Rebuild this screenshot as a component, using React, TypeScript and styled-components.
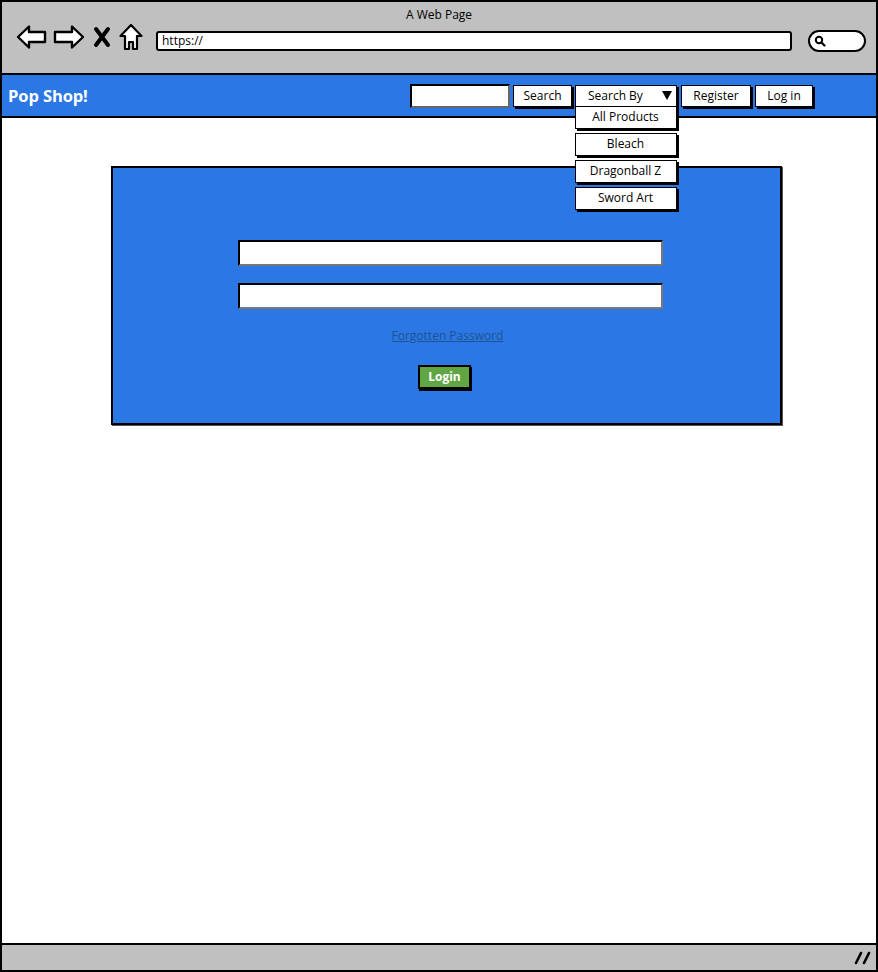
import React from "react";
import styled, { createGlobalStyle } from "styled-components";

const Global = createGlobalStyle`
  html, body { margin: 0; padding: 0; background: #fff; }
  body { font-family: "Open Sans", "Liberation Sans", sans-serif; }
  * { box-sizing: border-box; }
`;

const BLUE = "#2b78e4";
const GRAY = "#c0c0c0";

const Window = styled.div`
  width: 878px;
  height: 972px;
  border: 2px solid #000;
  display: flex;
  flex-direction: column;
  background: #fff;
`;

const TitleBar = styled.div`
  height: 73px;
  background: ${GRAY};
  border-bottom: 2px solid #000;
  display: flex;
  flex-direction: column;
`;

const Title = styled.div`
  height: 22px;
  padding-top: 4px;
  text-align: center;
  font-size: 12px;
  color: #000;
`;

const Toolbar = styled.div`
  display: flex;
  align-items: center;
  padding-left: 14px;
  height: 26px;
`;

const NavIcon = styled.svg<{ $gap: number }>`
  display: block;
  margin-right: ${(p) => p.$gap}px;
`;

const UrlBar = styled.div`
  width: 636px;
  height: 20px;
  border: 2px solid #000;
  border-radius: 3px;
  background: #fff;
  font-size: 12px;
  line-height: 16px;
  padding-left: 4px;
  margin-left: 13px;
  margin-top: 8px;
`;

const SearchPill = styled.div`
  width: 58px;
  height: 22px;
  border: 2px solid #000;
  border-radius: 11px;
  background: #fff;
  margin-left: 16px;
  margin-top: 8px;
  display: flex;
  align-items: center;
  padding-left: 4px;
`;

const Header = styled.div`
  height: 43px;
  background: ${BLUE};
  border-bottom: 2px solid #000;
  display: flex;
  align-items: center;
  padding: 0 63px 0 6px;
`;

const Brand = styled.div`
  color: #fff;
  font-weight: 700;
  font-size: 16.5px;
  letter-spacing: -0.1px;
`;

const Nav = styled.div`
  margin-left: auto;
  display: flex;
  align-items: center;
`;

const TextBox = styled.div`
  width: 100px;
  height: 24px;
  background: #fff;
  border: 2px solid #000;
  border-right-color: #666;
  border-bottom-color: #666;
  margin-right: 3px;
`;

const Button = styled.div<{ $w: number; $gap?: number }>`
  width: ${(p) => p.$w}px;
  height: 22px;
  background: #fff;
  border: 1.5px solid #000;
  box-shadow: 2px 2px 0 #000;
  font-size: 12px;
  line-height: 19px;
  text-align: center;
  color: #000;
  margin-right: ${(p) => p.$gap ?? 0}px;
  position: relative;
`;

const SelectButton = styled(Button)`
  display: flex;
  align-items: center;
  justify-content: space-between;
  padding: 0 4px 0 12px;
`;

const Menu = styled.div`
  position: absolute;
  left: -1.5px;
  top: 20px;
  display: flex;
  flex-direction: column;
  gap: 4px;
  z-index: 5;
`;

const MenuItem = styled.div`
  width: 102px;
  height: 23px;
  background: #fff;
  border: 1.5px solid #000;
  box-shadow: 2px 2px 0 #000;
  font-size: 12px;
  line-height: 20px;
  text-align: center;
  color: #000;
`;

const Content = styled.div`
  flex: 1;
  padding: 48px 0 0 109px;
`;

const Panel = styled.div`
  width: 671px;
  height: 259px;
  background: ${BLUE};
  border: 2px solid #000;
  box-shadow: 1px 1px 0 #555;
  display: flex;
  flex-direction: column;
  align-items: center;
  padding: 72px 0 0 8px;
`;

const Field = styled.div<{ $mb: number }>`
  width: 425px;
  height: 26px;
  background: #fff;
  border: 2px solid #000;
  border-right-color: #777;
  border-bottom-color: #777;
  margin-bottom: ${(p) => p.$mb}px;
`;

const Link = styled.a`
  font-size: 12px;
  color: #1c5394;
  text-decoration: underline;
  margin-bottom: 21px;
  margin-left: -6px;
`;

const LoginButton = styled.div`
  width: 53px;
  height: 24px;
  background: #62a543;
  border: 2px solid #000;
  box-shadow: 1px 2px 0 #000;
  color: #fff;
  font-weight: 700;
  font-size: 12px;
  line-height: 20px;
  text-align: center;
  margin-left: -12px;
`;

const StatusBar = styled.div`
  height: 27px;
  background: ${GRAY};
  border-top: 2px solid #000;
  display: flex;
  justify-content: flex-end;
  align-items: center;
  padding-right: 4px;
`;

export default function App() {
  return (
    <>
      <Global />
      <Window>
        <TitleBar>
          <Title>A Web Page</Title>
          <Toolbar>
            <NavIcon $gap={6} width="31" height="26" viewBox="0 0 31 26">
              <path d="M2 13 L13 2.5 L13 8 L29 8 L29 18 L13 18 L13 23.5 Z" fill="#fff" stroke="#000" strokeWidth="2.4" strokeLinejoin="round" />
            </NavIcon>
            <NavIcon $gap={8} width="32" height="26" viewBox="0 0 32 26">
              <path d="M30 13 L19 2.5 L19 8 L2 8 L2 18 L19 18 L19 23.5 Z" fill="#fff" stroke="#000" strokeWidth="2.4" strokeLinejoin="round" />
            </NavIcon>
            <NavIcon $gap={8} width="18" height="24" viewBox="0 0 18 24">
              <path d="M3 4 L15 20 M15 4 L3 20" stroke="#000" strokeWidth="4" strokeLinecap="round" />
            </NavIcon>
            <NavIcon $gap={0} width="24" height="28" viewBox="0 0 24 28">
              <path d="M12 2 L22.5 13 L18 13 L18 26 L14 26 L14 19 L10 19 L10 26 L6 26 L6 13 L1.5 13 Z" fill="#fff" stroke="#000" strokeWidth="2.2" strokeLinejoin="round" />
            </NavIcon>
            <UrlBar>https://</UrlBar>
            <SearchPill>
              <svg width="12" height="12" viewBox="0 0 12 12">
                <circle cx="5" cy="5" r="3.2" fill="none" stroke="#000" strokeWidth="2" />
                <path d="M7.5 7.5 L10.5 10.5" stroke="#000" strokeWidth="2.2" strokeLinecap="round" />
              </svg>
            </SearchPill>
          </Toolbar>
        </TitleBar>
        <Header>
          <Brand>Pop Shop!</Brand>
          <Nav>
            <TextBox />
            <Button $w={59} $gap={3}>Search</Button>
            <SelectButton $w={102} $gap={4}>
              <span>Search By</span>
              <svg width="10" height="9" viewBox="0 0 10 9">
                <path d="M0 0 L10 0 L5 9 Z" fill="#000" />
              </svg>
              <Menu>
                <MenuItem>All Products</MenuItem>
                <MenuItem>Bleach</MenuItem>
                <MenuItem>Dragonball Z</MenuItem>
                <MenuItem>Sword Art</MenuItem>
              </Menu>
            </SelectButton>
            <Button $w={70} $gap={4}>Register</Button>
            <Button $w={58}>Log in</Button>
          </Nav>
        </Header>
        <Content>
          <Panel>
            <Field $mb={17} />
            <Field $mb={18} />
            <Link>Forgotten Password</Link>
            <LoginButton>Login</LoginButton>
          </Panel>
        </Content>
        <StatusBar>
          <svg width="18" height="14" viewBox="0 0 18 14">
            <path d="M7 2 L2 12 M15 2 L10 12" stroke="#000" strokeWidth="2.6" strokeLinecap="round" />
          </svg>
        </StatusBar>
      </Window>
    </>
  );
}
